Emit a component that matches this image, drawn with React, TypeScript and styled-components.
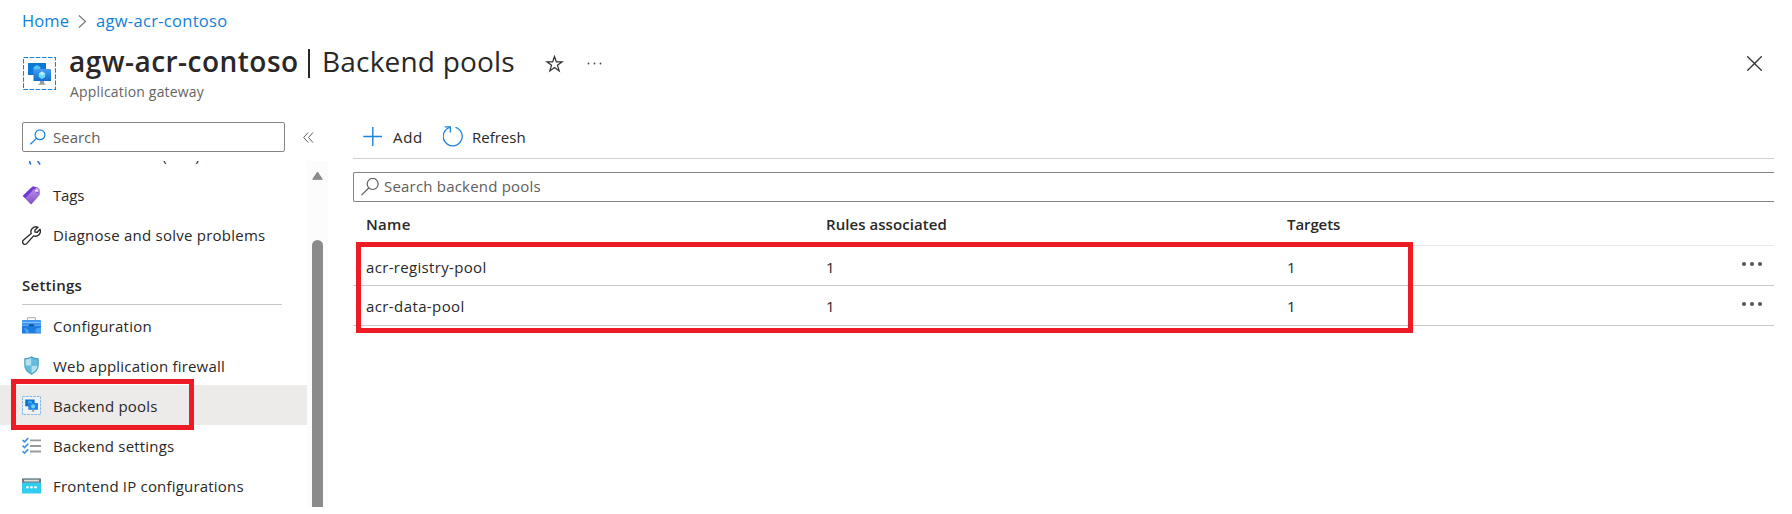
import React from "react";
import styled, { createGlobalStyle } from "styled-components";

const Global = createGlobalStyle`
  html, body { margin: 0; padding: 0; background: #fff; overflow: hidden; }
  * { box-sizing: border-box; }
  svg { display: block; flex: none; }
`;

const Page = styled.div`
  width: 1792px;
  height: 514px;
  overflow: hidden;
  display: flex;
  flex-direction: column;
  background: #fff;
  color: #292827;
  font-family: "Open Sans", "Noto Sans", sans-serif;
  font-size: 15px;
`;

const Label = styled.span<{ $track?: number }>`
  white-space: nowrap;
  letter-spacing: ${(p) => p.$track ?? 0}px;
`;

const Breadcrumb = styled.nav`
  flex: none;
  height: 43px;
  padding: 9px 0 0 22px;
  display: flex;
  align-items: flex-start;
  font-size: 16.5px;
  line-height: 24px;
`;

const Crumb = styled.a<{ $track: number }>`
  color: #0f7fd8;
  white-space: nowrap;
  letter-spacing: ${(p) => p.$track}px;
`;

const CrumbChevron = styled.svg`
  margin: 6px 9px 0 9px;
`;

const Header = styled.header`
  flex: none;
  height: 73px;
  padding-left: 23px;
  display: flex;
  align-items: flex-start;
`;

const ResourceIcon = styled.div`
  width: 46px;
  padding-top: 14px;
`;

const Titles = styled.div`
  width: 476px;
`;

const Title = styled.h1`
  margin: 0;
  display: flex;
  font-size: 28px;
  line-height: 36px;
  font-weight: 400;
`;

const ResourceName = styled.span`
  width: 235px;
  font-weight: 600;
  letter-spacing: 0.47px;
  white-space: nowrap;
`;

const Divider = styled.span`
  width: 2px;
  height: 29px;
  margin: 6px 12px 0 4px;
  background: #292827;
`;

const Subtitle = styled.div`
  margin-top: 4px;
  padding-left: 1px;
  font-size: 14px;
  line-height: 18px;
  color: #666463;
`;

const HeaderActions = styled.div`
  flex: 1;
  display: flex;
  gap: 22px;
  padding-top: 12px;
`;

const CloseButton = styled.div`
  padding: 13px 30px 0 0;
`;

const Body = styled.div`
  flex: 1;
  display: flex;
  align-items: flex-start;
`;

const Sidebar = styled.aside`
  width: 353px;
  padding-top: 6px;
`;

const SidebarTop = styled.div`
  display: flex;
  align-items: center;
  gap: 18px;
  padding-left: 22px;
  height: 30px;
`;

const SearchBox = styled.div<{ $open?: boolean }>`
  height: 30px;
  width: ${(p) => (p.$open ? "1421px" : "263px")};
  padding-left: ${(p) => (p.$open ? 7 : 7)}px;
  display: flex;
  align-items: center;
  gap: ${(p) => (p.$open ? 4 : 7)}px;
  border: 1px solid #868482;
  border-right-width: ${(p) => (p.$open ? 0 : 1)}px;
  border-radius: ${(p) => (p.$open ? "2px 0 0 2px" : "2px")};
  color: #605e5c;
  line-height: 26px;
  ${Label} {
    padding-bottom: ${(p) => (p.$open ? 2 : 0)}px;
  }
`;

const MenuPane = styled.div`
  margin-top: 9px;
  width: 328px;
  height: 346px;
  overflow: hidden;
  display: flex;
`;

const Menu = styled.div`
  width: 307px;
  margin-top: -26px;
`;

const MenuItem = styled.div<{ $active?: boolean }>`
  position: relative;
  height: 40px;
  padding-left: 22px;
  display: flex;
  align-items: center;
  gap: 12px;
  background: ${(p) => (p.$active ? "#ecebea" : "transparent")};
`;

const MenuLabel = styled(Label)<{ $drop?: number }>`
  line-height: 20px;
  padding-top: ${(p) => p.$drop ?? 0}px;
`;

const MenuHeading = styled.div`
  height: 50px;
  margin-left: 22px;
  width: 260px;
  padding-top: 20px;
  line-height: 20px;
  font-weight: 600;
  letter-spacing: 0.25px;
  border-bottom: 1px solid #c8c6c4;
`;

const Track = styled.div`
  width: 21px;
  height: 346px;
  padding: 10px 5px 0;
  background: #fcfcfc;
`;

const Thumb = styled.div`
  margin-top: 60px;
  height: 290px;
  border-radius: 6px;
  background: #8b8b8b;
`;

const Main = styled.main`
  width: 1421px;
`;

const Toolbar = styled.div`
  height: 43px;
  margin-bottom: 13px;
  padding: 0 0 1px 10px;
  display: flex;
  align-items: center;
  border-bottom: 1px solid #d2d0ce;
`;

const ToolButton = styled.div<{ $width: number; $gap: number }>`
  width: ${(p) => p.$width}px;
  display: flex;
  align-items: center;
  gap: ${(p) => p.$gap}px;
  line-height: 20px;
  ${Label} {
    padding-top: 1px;
  }
`;

const Row = styled.div<{ $head?: boolean; $drop: number }>`
  height: ${(p) => (p.$head ? 44 : 40)}px;
  padding: 0 11px 0 13px;
  display: grid;
  grid-template-columns: 460px 461px 1fr auto;
  align-items: center;
  font-weight: ${(p) => (p.$head ? 600 : 400)};
  border-bottom: 1px solid ${(p) => (p.$head ? "#e9e9e9" : "#c9c8c7")};
  ${Label} {
    padding-top: ${(p) => p.$drop}px;
    line-height: 20px;
  }
`;

const RowDots = styled.svg`
  margin-top: -3px;
`;

const Rows = styled.div`
  position: relative;
`;

const Callout = styled.div<{ $x: number; $y: number; $w: number; $h: number }>`
  position: absolute;
  left: ${(p) => p.$x}px;
  top: ${(p) => p.$y}px;
  width: ${(p) => p.$w}px;
  height: ${(p) => p.$h}px;
  border: 5px solid #ed1c24;
`;

const PoolGlyph = ({ size }: { size: number }) => (
  <svg width={size} height={size} viewBox="0 0 33 33">
    <defs>
      <linearGradient id="screen" x1="0" y1="1" x2="0" y2="0">
        <stop offset="0" stopColor="#0f70d0" />
        <stop offset="1" stopColor="#4a9bf0" />
      </linearGradient>
    </defs>
    <rect x=".5" y=".5" width="32" height="32" fill="#fff" stroke="#1a80d6" strokeWidth="1.1" strokeDasharray="4.6 1.5" />
    <rect x="5" y="6" width="18" height="12" rx=".5" fill="#0a78d6" />
    <path d="M14 8l3.4 1.900v4L14 15.800l-3.400-1.900v-4z" fill="#54c3ee" />
    <rect x="10.500" y="12" width="17.500" height="12" rx=".6" fill="url(#screen)" />
    <path d="M19 14.600l3.200 1.800v3.700L19 21.900l-3.200-1.800v-3.700z" fill="#6fdcf7" />
    <path d="M19 14.600l3.200 1.800-3.200 1.800-3.200-1.800z" fill="#b6f1fc" />
    <path d="M17.200 24h3.600l.6 2.800h1.200v1h-7.200v-1h1.200z" fill="#9a9a9a" />
  </svg>
);

const SmallPoolGlyph = () => (
  <svg width="19" height="19" viewBox="0 0 19 19">
    <rect x=".5" y=".5" width="18" height="18" fill="#f0f2f4" stroke="#7db8e8" strokeDasharray="2.600 1" />
    <rect x="3.200" y="3.500" width="9.500" height="6.800" fill="#0a74d2" />
    <path d="M8 4.500l2 1.100v2L8 8.800 6 7.600v-2z" fill="#3fa4e6" />
    <rect x="6.300" y="7" width="9.700" height="6.800" fill="#2484e4" />
    <path d="M11.100 8.200l1.900 1.100v2.200l-1.900 1.100-1.900-1.100V9.300z" fill="#6fd0f6" />
    <path d="M10.300 13.800h1.600l.7 1.900H9.600z" fill="#a0a0a0" />
  </svg>
);

const PeopleGlyph = () => (
  <svg width="19" height="19" viewBox="0 0 19 19" fill="none" stroke="#2a6fd6" strokeWidth="1.600">
    <circle cx="9.500" cy="5" r="3" />
    <path d="M7.800 14.500q-.4 1.800 1 4M15.600 14.500q.8 2 2.600 4" />
  </svg>
);

const TagGlyph = () => (
  <svg width="19" height="19" viewBox="0 0 19 19">
    <defs>
      <linearGradient id="tag" x1="0" y1="0" x2="0" y2="1">
        <stop offset="0" stopColor="#bd92e8" />
        <stop offset="1" stopColor="#8352c6" />
      </linearGradient>
    </defs>
    <path d="M10.200.8Q10.800.2 11.700.4L15.600 1.400Q16.300 1.600 16.300 2.300L3.200 12.500 1.200 10.500Q.6 9.800 1.200 9.200z" fill="#7038d8" />
    <path d="M12.600 2.200Q13 1.600 13.800 1.600l3 .6q.8.2.9 1l.3 4.600q0 .8-.5 1.400L9.700 17.900q-.6.6-1.200 0L3.200 12.600z" fill="url(#tag)" />
    <circle cx="14.600" cy="4.700" r="1.300" fill="#fff" />
    <path d="M12.600 3.600q-.2-2.400 1.300-2.300M14.600 5.600q.3 1.900 1.700 1.200" fill="none" stroke="#6b35b8" strokeWidth=".9" />
  </svg>
);

const WrenchGlyph = () => (
  <svg width="19" height="19" viewBox="0 0 19 19" fill="none" stroke="#2b2a29" strokeWidth="1.350" strokeLinejoin="round">
    <path d="M16 1.300A5 5 0 0 0 9.200 7.600L1.300 14.300a2.350 2.350 0 0 0 3.400 3.300L11.600 9.900A5 5 0 0 0 18 3.300L15.200 6.300 13 6 12.800 4.200z" />
  </svg>
);

const ToolboxGlyph = () => (
  <svg width="19" height="19" viewBox="0 0 19 19">
    <path d="M5.500 4V2.200q0-.6.600-.6h6.800q.6 0 .6.600V4" fill="none" stroke="#b9b9b9" strokeWidth="1.200" />
    <path d="M0 4.500q0-.6.600-.6h17.800q.6 0 .6.600V9.500H0z" fill="#3f97ee" />
    <path d="M0 9.500h19v7.500q0 .6-.6.600H.6q-.6 0-.6-.6z" fill="#1d7ce0" />
    <path d="M0 6.400h19" stroke="#86c6fa" strokeWidth="1" />
    <path d="M1.500 12q3 .2 4.200 1.600 1.900 2 1.300 3.200H3.500q.4-2.800-2-4.800zM13.300 14.500q.3-2 2.500-2.400l3.200-.6v5.300h-4.500q-1.600-.6-1.200-2.300z" fill="#4ba2f2" />
    <rect x="6.800" y="8.200" width="5.400" height="2" rx=".7" fill="#0b5797" />
  </svg>
);

const ShieldGlyph = () => (
  <svg width="19" height="19" viewBox="0 0 19 19">
    <path d="M9.500.3q2.500 2 7.300 2v7q0 5.700-7.300 9.600Q2.200 15 2.200 9.300v-7q4.800 0 7.300-2z" fill="#4fa3c6" />
    <path d="M9.500 9.500v7.900Q3.500 14 3.500 9.500z" fill="#62bede" />
    <path d="M9.500 1.800q-2.300 1.500-6 1.700v6h6zM9.500 9.500v7.900q6-3.400 6-7.900z" fill="#b5e0ee" />
    <path d="M9.500 1.800q2.300 1.500 6 1.700v6h-6z" fill="#62bede" />
  </svg>
);

const ChecklistGlyph = () => (
  <svg width="19" height="19" viewBox="0 0 19 19" fill="none">
    <path d="M8 4.300h11M8 10h11M8 15.500h11" stroke="#9b9b9b" strokeWidth="1.800" />
    <path d="M.6 4l1.900 1.900L6.300 2.100M.6 9.600l1.900 1.900 3.800-3.800M.6 15.200l1.900 1.900 3.800-3.800" stroke="#3a90e6" strokeWidth="1.600" />
  </svg>
);

const FrontendGlyph = () => (
  <svg width="19" height="19" viewBox="0 0 19 19">
    <rect y="2.500" width="19" height="15" rx=".6" fill="#32ccf0" />
    <path d="M0 6.500V3.100q0-.6.600-.6h17.800q.6 0 .6.600v3.400z" fill="#777" />
    <rect x="2" y="3.700" width="15" height="1.700" rx=".4" fill="#dedede" />
    <circle cx="5.500" cy="11.300" r="1.300" fill="#f0fcff" />
    <circle cx="9.500" cy="11.300" r="1.300" fill="#f0fcff" />
    <circle cx="13.500" cy="11.300" r="1.300" fill="#f0fcff" />
  </svg>
);

const settings = [
  { text: "Configuration", track: 0.25, icon: <ToolboxGlyph /> },
  { text: "Web application firewall", track: 0.19, icon: <ShieldGlyph /> },
  { text: "Backend pools", track: 0.21, icon: <SmallPoolGlyph />, active: true },
  { text: "Backend settings", track: 0.19, icon: <ChecklistGlyph /> },
  { text: "Frontend IP configurations", track: 0.19, icon: <FrontendGlyph /> },
];

const pools = [
  { name: "acr-registry-pool", track: 0.33, rules: 1, targets: 1, drop: 3 },
  { name: "acr-data-pool", track: 0.4, rules: 1, targets: 1, drop: 0 },
];

export default function App() {
  return (
    <Page>
      <Global />
      <Breadcrumb>
        <Crumb $track={0.1}>Home</Crumb>
        <CrumbChevron width="9" height="13" viewBox="0 0 9 13" fill="none" stroke="#757371" strokeWidth="1.100">
          <path d="M1 .5l6.500 6L1 12.500" />
        </CrumbChevron>
        <Crumb $track={0.3}>agw-acr-contoso</Crumb>
      </Breadcrumb>

      <Header>
        <ResourceIcon>
          <PoolGlyph size={33} />
        </ResourceIcon>
        <Titles>
          <Title>
            <ResourceName>agw-acr-contoso</ResourceName>
            <Divider />
            <Label $track={0.2}>Backend pools</Label>
          </Title>
          <Subtitle>
            <Label $track={0.18}>Application gateway</Label>
          </Subtitle>
        </Titles>
        <HeaderActions>
          <svg width="19" height="18" viewBox="0 0 19 18" fill="none" stroke="#323130" strokeWidth="1.200">
            <path d="M9.500 1.500l1.800 5.300h5.800l-4.700 3.500 1.800 5.600-4.700-3.400-4.700 3.400 1.800-5.600L1.900 6.800h5.800z" />
          </svg>
          <svg width="16" height="18" viewBox="0 0 16 18" fill="#484644">
            <circle cx="2.500" cy="8.500" r=".9" />
            <circle cx="8.500" cy="8.500" r=".9" />
            <circle cx="14.500" cy="8.500" r=".9" />
          </svg>
        </HeaderActions>
        <CloseButton>
          <svg width="15" height="15" viewBox="0 0 15 15" stroke="#323130" strokeWidth="1.300">
            <path d="M.3.3l14.400 14.400M14.700.3L.3 14.700" />
          </svg>
        </CloseButton>
      </Header>

      <Body>
        <Sidebar>
          <SidebarTop>
            <SearchBox>
              <svg width="16" height="16" viewBox="0 0 16 16" fill="none" stroke="#1580da" strokeWidth="1.200">
                <circle cx="10" cy="5.800" r="4.900" />
                <path d="M6.400 9.400L.4 15.300" />
              </svg>
              <Label $track={0}>Search</Label>
            </SearchBox>
            <svg width="11" height="11" viewBox="0 0 11 11" fill="none" stroke="#605e5c" strokeWidth="1">
              <path d="M5.200.5L.7 5.500l4.500 5M10 .5L5.500 5.500l4.500 5" />
            </svg>
          </SidebarTop>
          <MenuPane>
            <Menu>
              <MenuItem>
                <PeopleGlyph />
                <MenuLabel $track={0.35}>Access control (IAM)</MenuLabel>
              </MenuItem>
              <MenuItem>
                <TagGlyph />
                <MenuLabel $track={-0.2}>Tags</MenuLabel>
              </MenuItem>
              <MenuItem>
                <WrenchGlyph />
                <MenuLabel $track={0.24}>Diagnose and solve problems</MenuLabel>
              </MenuItem>
              <MenuHeading>Settings</MenuHeading>
              {settings.map((item) => (
                <MenuItem key={item.text} $active={item.active}>
                  {item.icon}
                  <MenuLabel $track={item.track} $drop={2}>{item.text}</MenuLabel>
                  {item.active && <Callout $x={11} $y={-6} $w={183} $h={51} />}
                </MenuItem>
              ))}
            </Menu>
            <Track>
              <svg width="11" height="9" viewBox="0 0 11 9">
                <path d="M5.500 1L10.300 8.300H.7z" fill="#8b8b8b" stroke="#8b8b8b" strokeLinejoin="round" />
              </svg>
              <Thumb />
            </Track>
          </MenuPane>
        </Sidebar>

        <Main>
          <Toolbar>
            <ToolButton $width={80} $gap={11}>
              <svg width="19" height="19" viewBox="0 0 19 19" stroke="#1a83da" strokeWidth="1.400">
                <path d="M9.800 0v19M.3 9.500H19" />
              </svg>
              <Label $track={0.7}>Add</Label>
            </ToolButton>
            <ToolButton $width={90} $gap={9}>
              <svg width="20" height="21" viewBox="0.5 0 20 21" fill="none" stroke="#1a83da" strokeWidth="1.300">
                <path d="M13 1.300A9.500 9.500 0 1 1 7.400 1.300" />
                <path d="M2.300 .900h5.500v5.600" />
              </svg>
              <Label>Refresh</Label>
            </ToolButton>
          </Toolbar>

          <SearchBox $open>
            <svg width="19" height="19" viewBox="0 0 19 19" fill="none" stroke="#605e5c" strokeWidth="1.200">
              <circle cx="11.700" cy="6" r="5.500" />
              <path d="M7.700 10L.5 17.200" />
            </svg>
            <Label $track={0.2}>Search backend pools</Label>
          </SearchBox>

          <Row $head $drop={0}>
            <Label $track={0.3}>Name</Label>
            <Label $track={0.06}>Rules associated</Label>
            <Label $track={-0.09}>Targets</Label>
          </Row>
          <Rows>
            {pools.map((pool) => (
              <Row key={pool.name} $drop={pool.drop}>
                <Label $track={pool.track}>{pool.name}</Label>
                <Label>{pool.rules}</Label>
                <Label>{pool.targets}</Label>
                <RowDots width="22" height="6" viewBox="0 0 22 6" fill="#5b5957">
                  <circle cx="3" cy="3" r="2.100" />
                  <circle cx="11" cy="3" r="2.100" />
                  <circle cx="19" cy="3" r="2.100" />
                </RowDots>
              </Row>
            ))}
            <Callout $x={3} $y={-4} $w={1057} $h={91} />
          </Rows>
        </Main>
      </Body>
    </Page>
  );
}
